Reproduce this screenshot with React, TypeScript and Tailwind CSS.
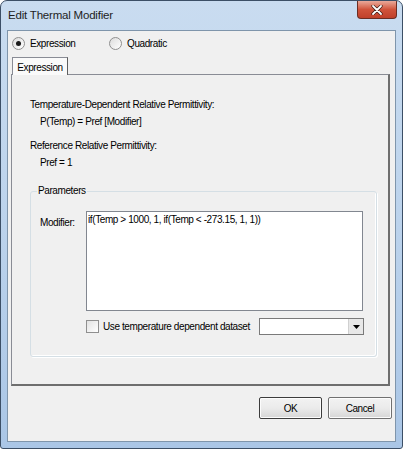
import React from "react";

const font = { fontFamily: '"Liberation Sans", Arial, sans-serif' };

function Radio({ checked }: { checked?: boolean }) {
  return (
    <span className="relative inline-block w-[13px] h-[13px] rounded-full border border-[#8f8f8f] bg-gradient-to-br from-[#dcdcdc] to-[#ffffff] shrink-0">
      {checked && (
        <span className="absolute left-[3px] top-[3px] w-[5px] h-[5px] rounded-full bg-[#1a1a1a]" />
      )}
    </span>
  );
}

export default function App() {
  return (
    <div
      className="w-[403px] h-[449px] rounded-t-[7px] rounded-b-[3px] border border-[#3c4f66] bg-gradient-to-b from-[#c9dcf0] via-[#bcd3ec] to-[#aac6e6] flex flex-col text-[10px] tracking-[-0.4px] text-black overflow-hidden"
      style={font}
    >
      <div className="h-[29px] flex items-start shrink-0">
        <div className="pl-[7px] pt-[6px] text-[11.5px] tracking-[-0.2px] text-[#1e1e1e]">Edit Thermal Modifier</div>
        <div className="ml-auto mr-[5px] w-[40px] h-[18px] rounded-b-[4px] border border-t-0 border-[#6b2d23] bg-gradient-to-b from-[#e9a99a] via-[#d0533b] to-[#c0402a] flex items-center justify-center">
          <svg width="12" height="10" viewBox="0 0 12 10">
            <path d="M2 1 L10 9 M10 1 L2 9" stroke="#3a1a14" strokeWidth="3.2" strokeLinecap="round" />
            <path d="M2 1 L10 9 M10 1 L2 9" stroke="#ffffff" strokeWidth="1.8" strokeLinecap="round" />
          </svg>
        </div>
      </div>
      <div className="mx-[6px] h-[412px] border border-[#7f95ab] bg-[#f0f0f0] flex flex-col">
        {/* radio row */}
        <div className="h-[24px] flex items-center pl-[4px] pt-[1px]">
          <div className="flex items-center gap-[5px] w-[97px]">
            <Radio checked />
            <span>Expression</span>
          </div>
          <div className="flex items-center gap-[5px]">
            <Radio />
            <span>Quadratic</span>
          </div>
        </div>
        {/* tab header */}
        <div className="pl-[4px] h-[19px] flex items-end">
          <div className="relative w-[56px] h-[18px] border border-b-0 border-[#898c95] bg-[#fafafa] flex items-center justify-center -mb-px z-10 pt-[1px] border-r-[#5f5f5f]">
            Expression
          </div>
        </div>
        {/* tab page */}
        <div className="ml-[3px] w-[379px] h-[312px] border border-[#898c95] border-r-[#6e6e6e] border-b-[#6e6e6e] border-r-2 border-b-2 bg-[#f0f0f0] flex flex-col">
          <div className="pl-[18px] pt-[21px] leading-[17px]">
            <div>Temperature-Dependent Relative Permittivity:</div>
            <div className="pl-[10px]">P(Temp) = Pref [Modifier]</div>
            <div className="mt-[7px]">Reference Relative Permittivity:</div>
            <div className="pl-[10px]">Pref = 1</div>
          </div>
          {/* group box */}
          <div className="relative ml-[18px] mt-[20px] w-[347px] h-[166px] border border-[#d5dfe5] rounded-[3px] shadow-[inset_-1px_-1px_0_#ffffff,1px_1px_0_#ffffff]">
            <div className="absolute -top-[8px] left-[6px] px-[1px] bg-[#f0f0f0] leading-[14px]">Parameters</div>
            <div className="flex pt-[19px] pl-[9px]">
              <div className="w-[46px] pt-[4px]">Modifier:</div>
              <div className="w-[277px] h-[100px] border border-[#828790] bg-white pl-[1px] pt-[1px] leading-[14px] whitespace-nowrap">
                if(Temp &gt; 1000, 1, if(Temp &lt; -273.15, 1, 1))
              </div>
            </div>
            <div className="flex items-center pl-[55px] mt-[7px]">
              <span className="w-[13px] h-[13px] border border-[#8f8f8f] bg-gradient-to-br from-[#e2e2e2] to-white shrink-0" />
              <span className="ml-[4px] w-[156px] whitespace-nowrap">Use temperature dependent dataset</span>
              <div className="w-[105px] h-[17px] border border-[#7a7a7a] bg-white flex justify-end">
                <div className="w-[15px] h-[15px] border-l border-[#d0d0d0] bg-[#e8e8e8] flex items-center justify-center">
                  <svg width="7" height="4" viewBox="0 0 7 4">
                    <path d="M0 0 L7 0 L3.5 4 Z" fill="#000" />
                  </svg>
                </div>
              </div>
            </div>
          </div>
        </div>
        {/* buttons */}
        <div className="flex justify-end gap-[6px] pr-[3px] mt-[11px]">
          <div className="w-[63px] h-[22px] rounded-[2px] border border-[#3c3c3c] bg-gradient-to-b from-[#f2f2f2] via-[#ebebeb] to-[#d6d6d6] shadow-[inset_0_0_0_1px_#fcfcfc] flex items-center justify-center">
            OK
          </div>
          <div className="w-[64px] h-[22px] rounded-[2px] border border-[#707070] bg-gradient-to-b from-[#f2f2f2] via-[#ebebeb] to-[#d6d6d6] shadow-[inset_0_0_0_1px_#fcfcfc] flex items-center justify-center">
            Cancel
          </div>
        </div>
      </div>
    </div>
  );
}
